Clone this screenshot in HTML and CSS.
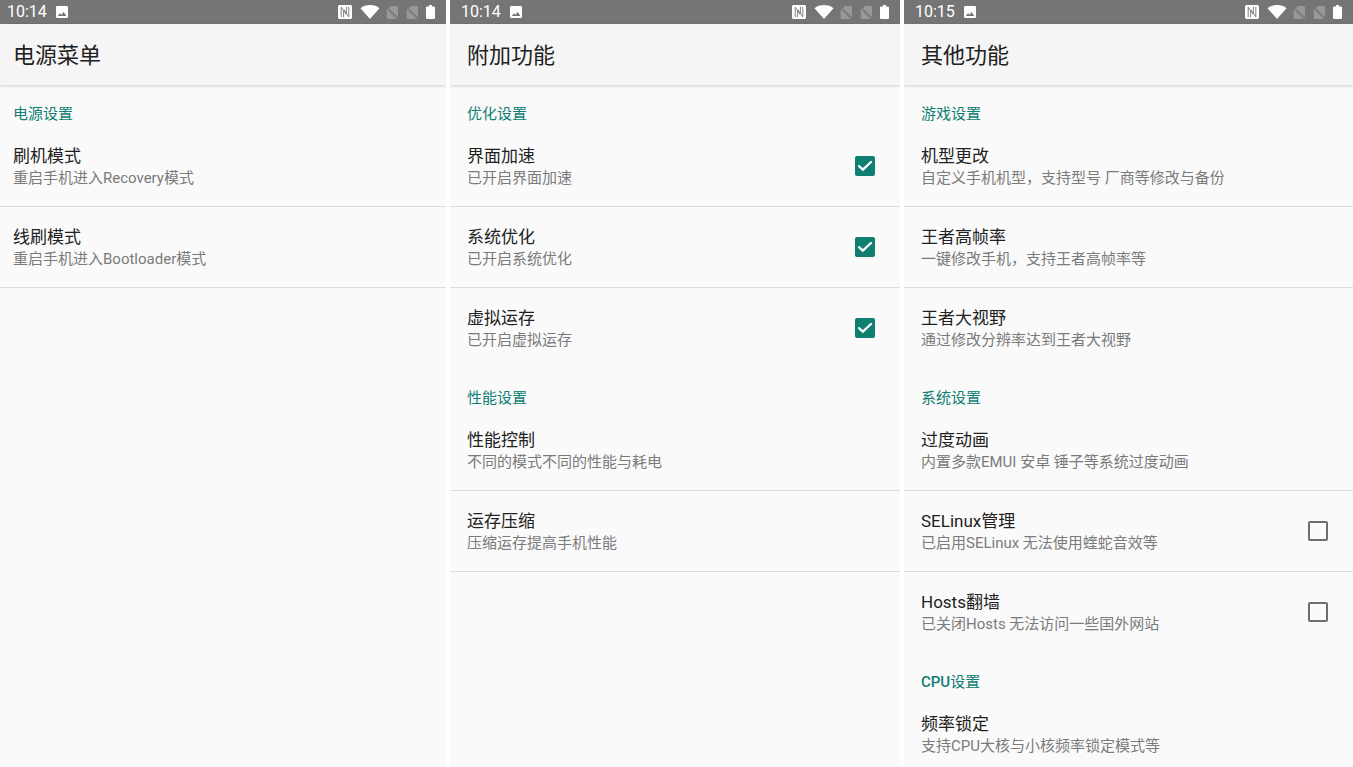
FILE: index.html
```html
<!DOCTYPE html>
<html lang="zh-CN">
<head>
<meta charset="utf-8">
<meta name="viewport" content="width=device-width, initial-scale=1">
<title>功能设置</title>
<link rel="stylesheet" href="styles.css">
</head>
<body>
<svg class="sprite" aria-hidden="true">
  <symbol id="i-image" viewBox="0 0 12 12"><path fill-rule="evenodd" d="M1.2 0h9.6A1.2 1.2 0 0 1 12 1.200v9.600A1.2 1.2 0 0 1 10.800 12H1.200A1.200 1.200 0 0 1 0 10.800V1.200A1.200 1.200 0 0 1 1.200 0zM1.800 10h8.600L7.600 6 5.500 8.800 4 7.200z"/></symbol>
  <symbol id="i-nfc" viewBox="0 0 14 14"><path d="M1 0h12l1 1v12l-1 1H1l-1-1V1z"/><path d="M3.200 12.200V2.200L8 9.200M10.800 1.800v10L6 4.800M5.600 6v6.200M8.400 8V1.800" fill="none" stroke="#757575" stroke-width="0.900"/></symbol>
  <symbol id="i-wifi" viewBox="0 0 20 14"><path d="M10 14 .5 3.200C3 1.200 6.200 0 10 0s7 1.200 9.500 3.200z"/></symbol>
  <symbol id="i-sim" viewBox="0 0 12 13"><path d="M5 0h6l1 1v10.200L2.700 2.200zM1.200 3.200 10.600 13H1.500L.7 12V3.800z"/><path d="M.6 1.200 11.600 12.600" fill="none" stroke="#8a8a8a" stroke-width="0.800"/></symbol>
  <symbol id="i-battery" viewBox="0 0 9 14"><path d="M3 0h3v1.500h2.200l.8.800v10.900l-.8.800H.8l-.8-.8V2.300l.8-.8H3z"/></symbol>
</svg>
<main class="screens">

  <section class="screen screen-power">
    <div class="status">
      <time>10:14</time><svg class="i-image"><use href="#i-image"/></svg>
      <div class="status-icons">
        <svg class="i-nfc"><use href="#i-nfc"/></svg><svg class="i-wifi"><use href="#i-wifi"/></svg><svg class="i-sim"><use href="#i-sim"/></svg><svg class="i-sim"><use href="#i-sim"/></svg><svg class="i-battery"><use href="#i-battery"/></svg>
      </div>
    </div>
    <header class="bar"><h1>电源菜单</h1></header>
    <h2 class="group">电源设置</h2>
    <ul class="list">
      <li class="item"><div><h3>刷机模式</h3><p>重启手机进入Recovery模式</p></div></li>
      <li class="item"><div><h3>线刷模式</h3><p>重启手机进入Bootloader模式</p></div></li>
    </ul>
  </section>

  <section class="screen">
    <div class="status">
      <time>10:14</time><svg class="i-image"><use href="#i-image"/></svg>
      <div class="status-icons">
        <svg class="i-nfc"><use href="#i-nfc"/></svg><svg class="i-wifi"><use href="#i-wifi"/></svg><svg class="i-sim"><use href="#i-sim"/></svg><svg class="i-sim"><use href="#i-sim"/></svg><svg class="i-battery"><use href="#i-battery"/></svg>
      </div>
    </div>
    <header class="bar"><h1>附加功能</h1></header>
    <h2 class="group">优化设置</h2>
    <ul class="list open">
      <li class="item"><label for="ui"><h3>界面加速</h3><p>已开启界面加速</p></label><input type="checkbox" id="ui" checked></li>
      <li class="item"><label for="sys"><h3>系统优化</h3><p>已开启系统优化</p></label><input type="checkbox" id="sys" checked></li>
      <li class="item"><label for="vm"><h3>虚拟运存</h3><p>已开启虚拟运存</p></label><input type="checkbox" id="vm" checked></li>
    </ul>
    <h2 class="group">性能设置</h2>
    <ul class="list">
      <li class="item"><div><h3>性能控制</h3><p>不同的模式不同的性能与耗电</p></div></li>
      <li class="item"><div><h3>运存压缩</h3><p>压缩运存提高手机性能</p></div></li>
    </ul>
  </section>

  <section class="screen">
    <div class="status">
      <time>10:15</time><svg class="i-image"><use href="#i-image"/></svg>
      <div class="status-icons">
        <svg class="i-nfc"><use href="#i-nfc"/></svg><svg class="i-wifi"><use href="#i-wifi"/></svg><svg class="i-sim"><use href="#i-sim"/></svg><svg class="i-sim"><use href="#i-sim"/></svg><svg class="i-battery"><use href="#i-battery"/></svg>
      </div>
    </div>
    <header class="bar"><h1>其他功能</h1></header>
    <h2 class="group">游戏设置</h2>
    <ul class="list open">
      <li class="item"><div><h3>机型更改</h3><p>自定义手机机型，支持型号 厂商等修改与备份</p></div></li>
      <li class="item"><div><h3>王者高帧率</h3><p>一键修改手机，支持王者高帧率等</p></div></li>
      <li class="item"><div><h3>王者大视野</h3><p>通过修改分辨率达到王者大视野</p></div></li>
    </ul>
    <h2 class="group">系统设置</h2>
    <ul class="list open">
      <li class="item"><div><h3>过度动画</h3><p>内置多款EMUI 安卓 锤子等系统过度动画</p></div></li>
      <li class="item"><label for="selinux"><h3>SELinux管理</h3><p>已启用SELinux 无法使用蝰蛇音效等</p></label><input type="checkbox" id="selinux"></li>
      <li class="item"><label for="hosts"><h3>Hosts翻墙</h3><p>已关闭Hosts 无法访问一些国外网站</p></label><input type="checkbox" id="hosts"></li>
    </ul>
    <h2 class="group"><span class="latin">CPU</span>设置</h2>
    <ul class="list open">
      <li class="item"><div><h3>频率锁定</h3><p>支持CPU大核与小核频率锁定模式等</p></div></li>
    </ul>
  </section>

</main>
</body>
</html>
```
FILE: styles.css
```css
* { box-sizing: border-box; margin: 0; padding: 0; }

body {
  background: #fff;
  color: #212121;
  font-family: Roboto, "Noto Sans CJK SC", sans-serif;
}

.sprite { display: none; }

.screens {
  display: grid;
  grid-template-columns: 446fr 450fr 449fr;
  gap: 4px;
  height: 100vh;
}

.screen {
  --edge: 17px;
  background: #fafafa;
  min-width: 0;
  overflow: hidden;
}
.screen-power { --edge: 13px; }

.status {
  display: flex;
  align-items: center;
  gap: 9px;
  height: 24px;
  padding: 0 11px 0 calc(var(--edge) - 6px);
  background: #757575;
  color: #fff;
  font-size: 16px;
  line-height: 24px;
}
.status svg { fill: #fff; display: block; }
.status-icons { display: flex; align-items: center; gap: 8px; margin-left: auto; }
.i-image { width: 12px; height: 12px; }
.i-nfc { width: 14px; height: 14px; }
.i-wifi { width: 20px; height: 14px; margin-right: -2px; }
.status .i-sim { width: 12px; height: 13px; fill: #989898; }
.i-battery { width: 9px; height: 14px; }

.bar {
  display: flex;
  align-items: center;
  height: 61px;
  padding: 2px var(--edge) 0;
  background: #f5f5f5;
  box-shadow: 0 1px 3px rgba(0, 0, 0, 0.18);
}
.bar h1 { font-size: 22px; line-height: 32px; font-weight: 400; }

.group {
  height: 41px;
  padding: 18px var(--edge) 0;
  color: #0f7f72;
  font-size: 15px;
  line-height: 22px;
  font-weight: 400;
}
.latin { font-weight: 500; }

.list { list-style: none; }

.item {
  display: flex;
  align-items: center;
  justify-content: space-between;
  min-height: 81px;
  padding: 18px 25px 18px var(--edge);
  border-bottom: 1px solid #dcdcdc;
}
.open .item:last-child { border-bottom-color: transparent; }
.item h3 { font-size: 17px; line-height: 24px; font-weight: 400; }
.item p { color: #7b7b7b; font-size: 15px; line-height: 20px; }

.item input {
  display: grid;
  place-items: center;
  flex: none;
  width: 20px;
  height: 20px;
  appearance: none;
  border: 2px solid #6e6e6e;
  border-radius: 2px;
}
.item input:checked { background: #0f7f72; border-color: #0f7f72; }
.item input:checked::after {
  content: "";
  width: 15px;
  height: 11px;
  background: #fff;
  clip-path: polygon(0 52%, 10% 38%, 36% 68%, 90% 0, 100% 14%, 36% 98%);
}
```
